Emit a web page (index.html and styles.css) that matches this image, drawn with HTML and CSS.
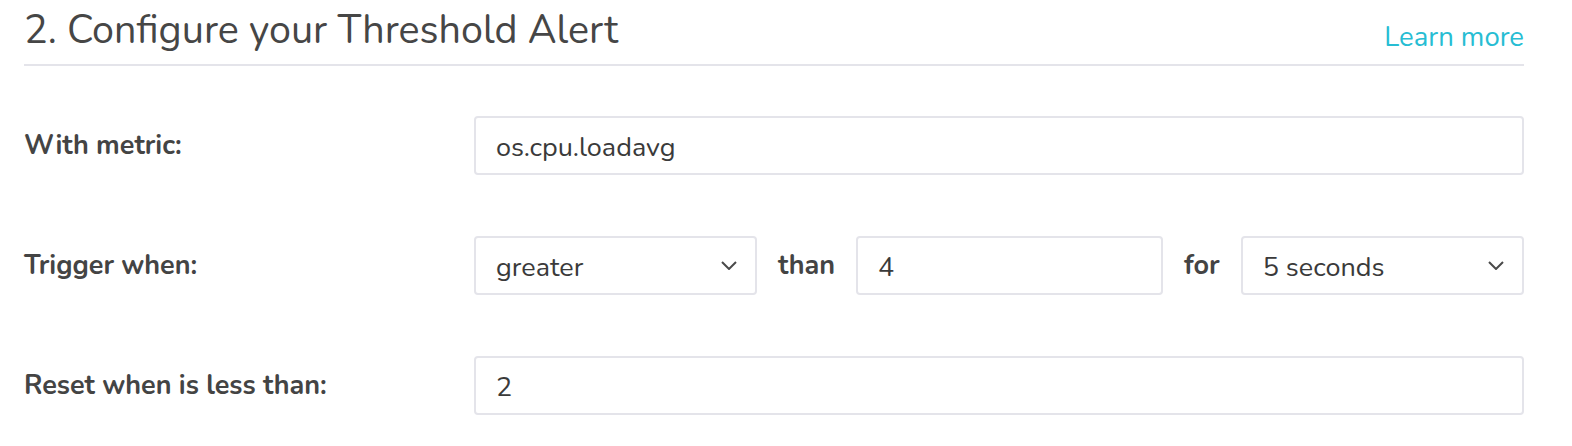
FILE: index.html
```html
<!DOCTYPE html>
<html>
<head>
<meta charset="utf-8">
<link rel="stylesheet" href="styles.css">
</head>
<body>
<div class="panel">
  <div class="header">
    <h2 class="title">2. Configure your Threshold Alert</h2>
    <a class="learn" href="#">Learn more</a>
  </div>
  <div class="rows">
    <div class="row">
      <div class="label">With metric:</div>
      <div class="field grow">os.cpu.loadavg</div>
    </div>
    <div class="row">
      <div class="label">Trigger when:</div>
      <div class="controls">
        <div class="field select sel1"><span>greater</span>
          <svg class="chev" width="16" height="9" viewBox="0 0 16 9"><path d="M1 1 L8 8 L15 1" fill="none" stroke="#4a4a4a" stroke-width="2"/></svg>
        </div>
        <span class="word">than</span>
        <div class="field num">4</div>
        <span class="word">for</span>
        <div class="field select sel2"><span>5 seconds</span>
          <svg class="chev" width="16" height="9" viewBox="0 0 16 9"><path d="M1 1 L8 8 L15 1" fill="none" stroke="#4a4a4a" stroke-width="2"/></svg>
        </div>
      </div>
    </div>
    <div class="row">
      <div class="label">Reset when is less than:</div>
      <div class="field grow">2</div>
    </div>
  </div>
</div>
</body>
</html>
```
FILE: styles.css
```css
* { box-sizing: border-box; }
body {
  margin: 0;
  background: #fff;
  font-family: "Nunito", "Lato", "Open Sans", sans-serif;
  color: #444;
}
.panel {
  width: 1524px;
  padding-left: 24px;
}
.header {
  display: flex;
  justify-content: space-between;
  align-items: flex-start;
  border-bottom: 2px solid #e4e4ea;
  height: 66px;
}
.title {
  margin: 3px 0 0;
  font-weight: 400;
  font-size: 39.5px;
  color: #464646;
  line-height: normal;
}
.learn {
  margin-top: 18px;
  color: #27bdd3;
  text-decoration: none;
  font-size: 27.5px;
  line-height: normal;
}
.rows {
  display: flex;
  flex-direction: column;
  gap: 61px;
  padding-top: 50px;
}
.row {
  display: flex;
  align-items: center;
  height: 59px;
}
.label {
  width: 450px;
  flex: none;
  font-weight: 700;
  font-size: 27px;
  color: #444;
}
.field {
  height: 59px;
  border: 2px solid #e4e4ea;
  border-radius: 4px;
  padding: 4px 20px 0;
  display: flex;
  align-items: center;
  font-size: 27px;
  color: #3a3a3a;
}
.grow { flex: 1; }
.controls {
  flex: 1;
  display: flex;
  align-items: center;
}
.select { justify-content: space-between; padding-right: 18px; }
.sel1 { width: 283px; flex: none; }
.num { width: 307px; flex: none; }
.sel2 { flex: 1; }
.word {
  font-weight: 700;
  font-size: 27px;
  padding: 0 21px;
}
.chev { flex: none; margin-top: -4px; }
```
